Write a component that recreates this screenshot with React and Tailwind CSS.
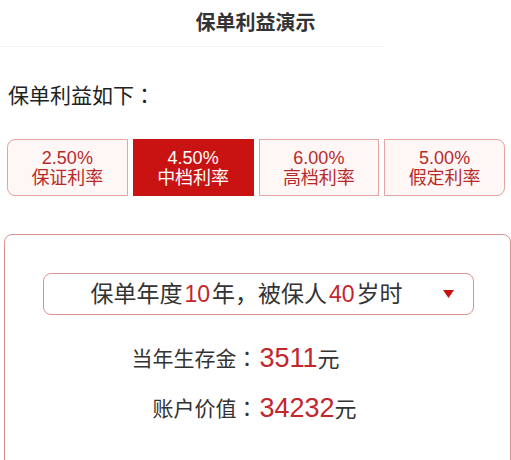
import React from "react";

const font = { fontFamily: '"Liberation Sans", Arial, "Noto Sans CJK SC", sans-serif' };

const rates = [
  { rate: "2.50%", name: "保证利率", first: true },
  { rate: "4.50%", name: "中档利率", active: true },
  { rate: "6.00%", name: "高档利率" },
  { rate: "5.00%", name: "假定利率", last: true },
];

function Colon() {
  return <span className="font-['Noto_Sans_CJK_TC',sans-serif]">：</span>;
}

export default function App() {
  return (
    <div className="w-[511px] h-[460px] overflow-hidden bg-white text-[#333]" style={font}>
      <div className="h-[46px] flex items-center justify-center text-[20px] font-bold text-[#333]">
        保单利益演示
      </div>
      <div className="w-[383px] h-px bg-[#f3f3f3]" />

      <div className="mt-[33px] pl-[8px] text-[21px] leading-[28px] text-[#222]">
        保单利益如下<Colon />
      </div>

      <div className="mt-[29px] ml-[7px] mr-[6px] flex gap-[5px]">
        {rates.map((r) => (
          <div
            key={r.name}
            className={
              "flex-1 h-[57px] flex flex-col items-center justify-center border text-[18px] leading-[20px] " +
              (r.active
                ? "bg-[#c91212] border-[#c91212] text-white"
                : "bg-[#fff7f6] border-[#e5a4a4] text-[#b82a2a]") +
              (r.first ? " rounded-l-[8px]" : "") +
              (r.last ? " rounded-r-[8px]" : "")
            }
          >
            <span>{r.rate}</span>
            <span>{r.name}</span>
          </div>
        ))}
      </div>

      <div className="mt-[38px] ml-[4px] h-[300px] border border-[#d89393] rounded-t-[8px]">
        <div className="mt-[38px] ml-[38px] mr-[36px] h-[42px] border border-[#d89393] rounded-[8px] flex items-center pl-[6px] text-[23px] text-[#333]">
          <span className="flex-1 text-center leading-none">
            保单年度<span className="text-[#c1272d] mx-[2px]">10</span>年，被保人<span className="text-[#c1272d] mx-[2px]">40</span>岁时
          </span>
          <svg width="11" height="8" viewBox="0 0 11 8" className="mr-[19px]">
            <polygon points="0,0 11,0 5.5,8" fill="#c91212" />
          </svg>
        </div>

        <div className="mt-[18px] grid grid-cols-2 h-[50px] items-center">
          <div className="text-right text-[21px] text-[#333]">当年生存金<Colon /></div>
          <div className="flex items-baseline pl-[2px]">
            <span className="text-[27px] text-[#c1272d]">3511</span>
            <span className="text-[22px] text-[#333]">元</span>
          </div>
        </div>
        <div className="grid grid-cols-2 h-[50px] items-center">
          <div className="text-right text-[21px] text-[#333]">账户价值<Colon /></div>
          <div className="flex items-baseline pl-[2px]">
            <span className="text-[27px] text-[#c1272d]">34232</span>
            <span className="text-[22px] text-[#333]">元</span>
          </div>
        </div>
      </div>
    </div>
  );
}
